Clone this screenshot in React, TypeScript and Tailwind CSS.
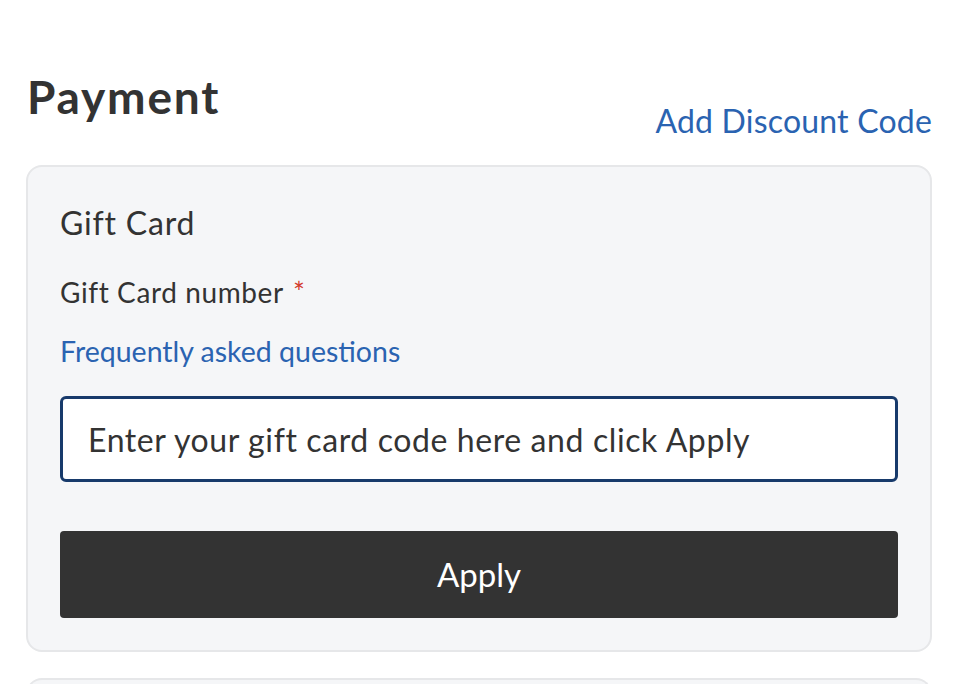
import React, { useState } from 'react'

export default function App() {
  const [code, setCode] = useState('Enter your gift card code here and click Apply')

  return (
    <div className="min-h-screen bg-white font-['Lato',sans-serif] text-[#333333] overflow-hidden">
      <div className="pl-[26px] pr-[48px] pt-[69px]">
        {/* Header */}
        <div className="flex items-start justify-between">
          <h1 className="text-[46px] font-bold leading-[56px] tracking-[1.8px] pl-[1px]">Payment</h1>
          <a href="#" className="mt-[32px] text-[32px] leading-[40px] tracking-[0.2px] text-[#2a63b1]">
            Add Discount Code
          </a>
        </div>

        {/* Gift card panel */}
        <div className="mt-[24px] rounded-[16px] border-2 border-[#e6e7e9] bg-[#f5f6f8] px-[32px] pt-[36px] pb-[32px]">
          <h2 className="text-[32px] leading-[40px] tracking-[0.8px]">Gift Card</h2>
          <div className="mt-[31px] text-[28px] leading-[36px] tracking-[0.6px]">
            Gift Card number <span className="ml-[2px] text-[#d33a2c]">*</span>
          </div>
          <a href="#" className="mt-[23px] block text-[28.5px] leading-[36px] text-[#2a63b1]">
            Frequently asked questions
          </a>
          <input
            value={code}
            onChange={(e) => setCode(e.target.value)}
            className="mt-[27px] block h-[86px] w-full rounded-[6px] border-[3px] border-[#173a6b] bg-white px-[25px] text-[32px] tracking-[0.6px] text-[#333333] outline-none"
          />
          <button className="mt-[49px] block h-[87px] w-full rounded-[4px] bg-[#333333] text-[33px] text-white">
            Apply
          </button>
        </div>

        {/* Next panel peeking in */}
        <div className="mt-[26px] h-[40px] rounded-t-[16px] border-2 border-b-0 border-[#e6e7e9] bg-[#f5f6f8]" />
      </div>
    </div>
  )
}
